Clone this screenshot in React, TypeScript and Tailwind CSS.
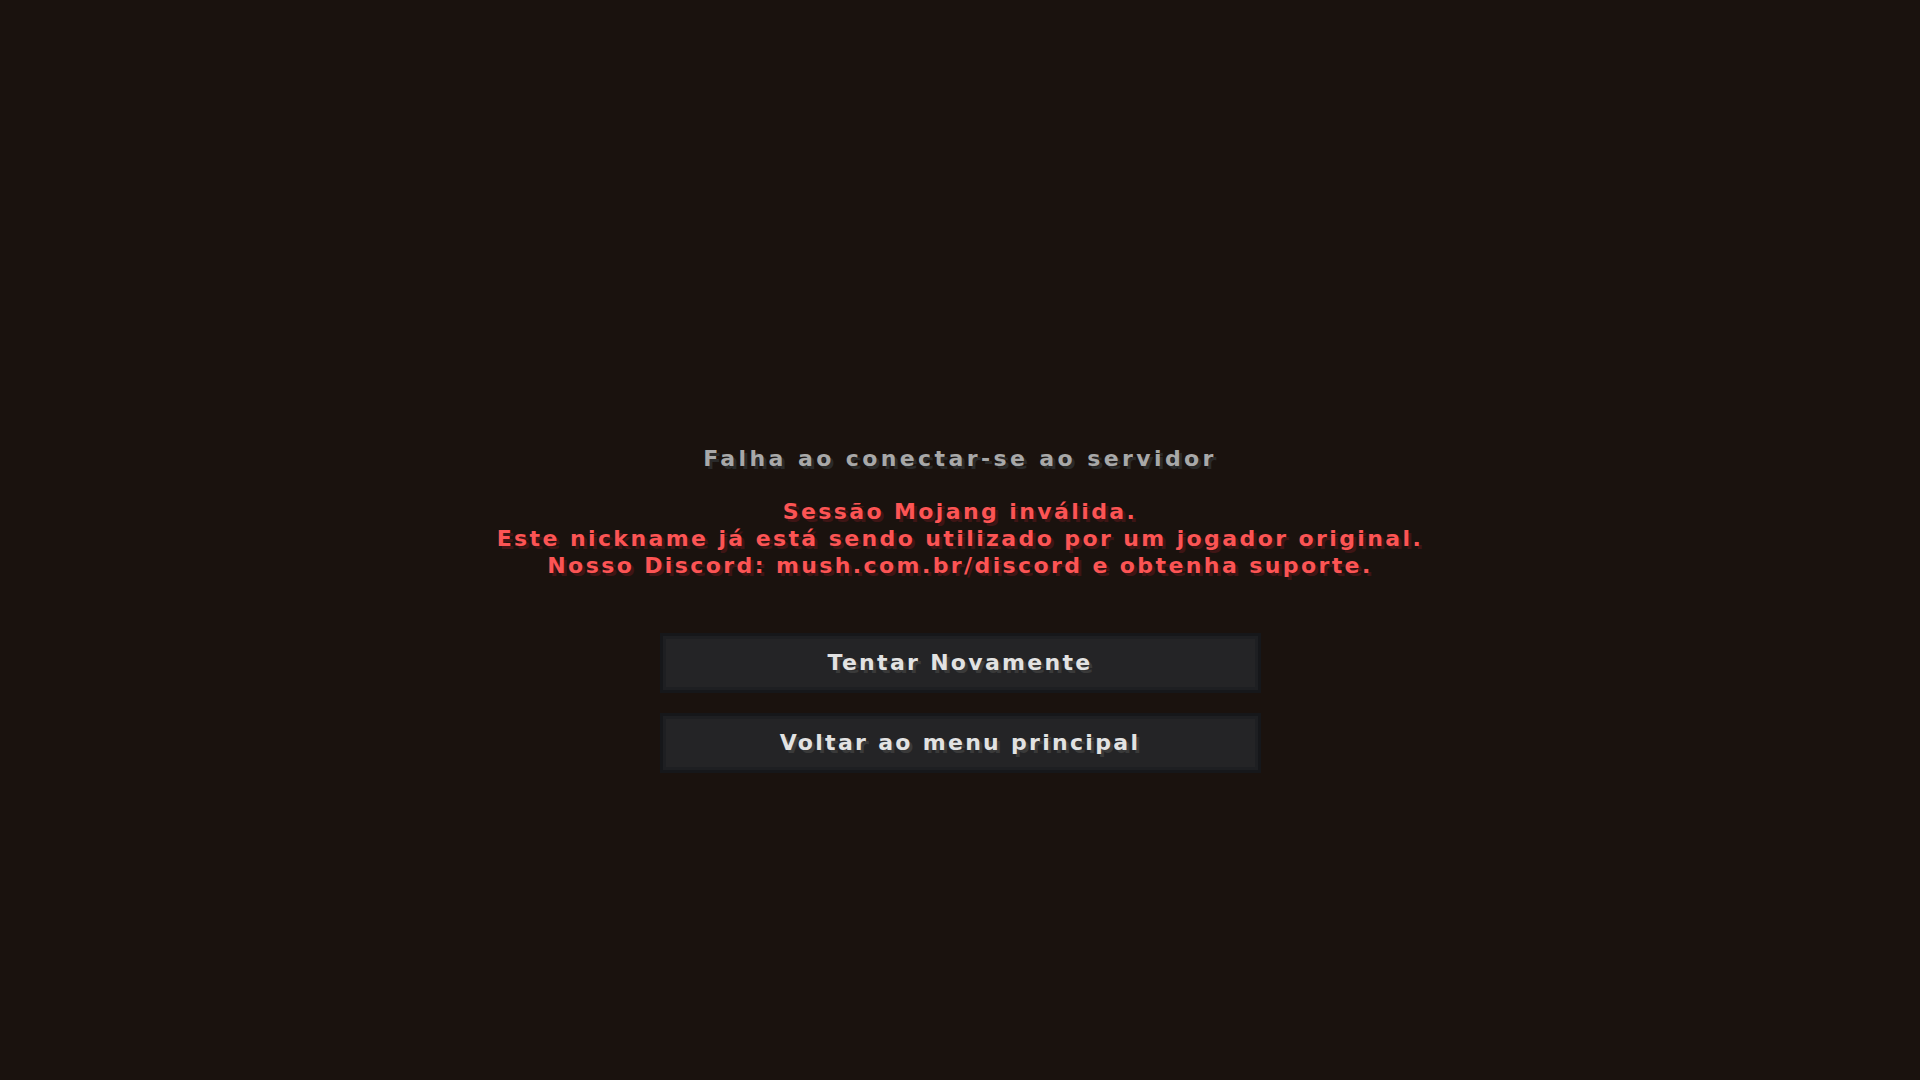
import React from "react";

const font = { fontFamily: '"DejaVu Sans", "Liberation Sans", sans-serif' };

function McButton({ label }: { label: string }) {
  return (
    <div className="w-[601px] h-[60px] border-[3px] border-[#16171a] bg-[#242426] shadow-[inset_0_0_0_3px_#1e1f22] flex items-center justify-center">
      <span className="text-[22px] leading-[27px] font-bold tracking-[2.3px] text-[#e2e2e2] [text-shadow:3px_3px_0_#3a3a3a] -mt-[2px]">
        {label}
      </span>
    </div>
  );
}

export default function App() {
  return (
    <div
      className="w-[1920px] h-[1080px] bg-[#1a120e] flex flex-col items-center pt-[445px] overflow-hidden"
      style={font}
    >
      <div className="text-[22px] leading-[27px] font-bold tracking-[3.4px] text-[#a8a8a8] [text-shadow:3px_3px_0_#2a2a2a]">
        Falha ao conectar-se ao servidor
      </div>
      <div className="mt-[26px] flex flex-col items-center text-[22px] leading-[27px] font-bold tracking-[2.4px] text-[#fc5454] [text-shadow:3px_3px_0_#3f1515]">
        <div>Sessão Mojang inválida.</div>
        <div>Este nickname já está sendo utilizado por um jogador original.</div>
        <div>Nosso Discord: mush.com.br/discord e obtenha suporte.</div>
      </div>
      <div className="mt-[54px] flex flex-col items-center gap-[20px]">
        <McButton label="Tentar Novamente" />
        <McButton label="Voltar ao menu principal" />
      </div>
    </div>
  );
}
